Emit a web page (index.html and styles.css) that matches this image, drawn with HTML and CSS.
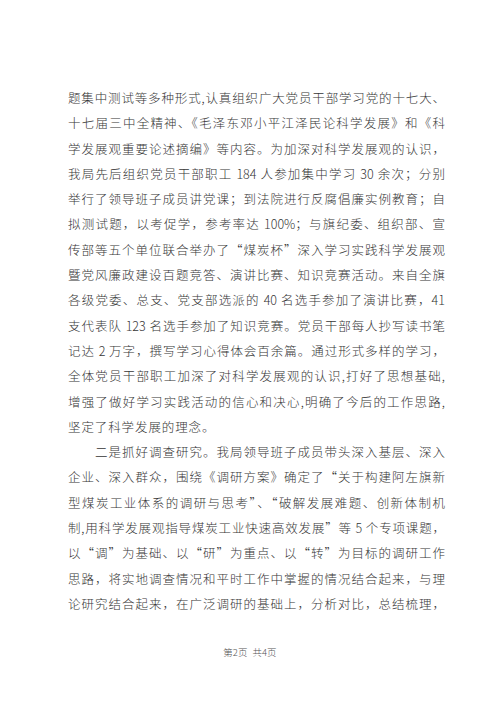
FILE: index.html
```html
<!DOCTYPE html>
<html lang="zh-CN">
<head>
    <meta charset="UTF-8">
    <meta name="viewport" content="width=device-width, initial-scale=1.0">
    <title>第2页</title>
    <link rel="stylesheet" href="styles.css">
</head>
<body>
    <div class="page">
        <div class="text">
            <div class="ln">题集中测试等多种形式,认真组织广大党员干部学习党的十七大、</div>
            <div class="ln">十七届三中全精神、《毛泽东邓小平江泽民论科学发展》和《科</div>
            <div class="ln">学发展观重要论述摘编》等内容。为加深对科学发展观的认识，</div>
            <div class="ln">我局先后组织党员干部职工 184 人参加集中学习 30 余次；分别</div>
            <div class="ln">举行了领导班子成员讲党课；到法院进行反腐倡廉实例教育；自</div>
            <div class="ln">拟测试题，以考促学，参考率达 100%；与旗纪委、组织部、宣</div>
            <div class="ln">传部等五个单位联合举办了“煤炭杯”深入学习实践科学发展观</div>
            <div class="ln">暨党风廉政建设百题竞答、演讲比赛、知识竞赛活动。来自全旗</div>
            <div class="ln">各级党委、总支、党支部选派的 40 名选手参加了演讲比赛，41</div>
            <div class="ln">支代表队 123 名选手参加了知识竞赛。党员干部每人抄写读书笔</div>
            <div class="ln">记达 2 万字，撰写学习心得体会百余篇。通过形式多样的学习，</div>
            <div class="ln">全体党员干部职工加深了对科学发展观的认识,打好了思想基础,</div>
            <div class="ln">增强了做好学习实践活动的信心和决心,明确了今后的工作思路,</div>
            <div class="ln last">坚定了科学发展的理念。</div>
            <div class="ln indent">二是抓好调查研究。我局领导班子成员带头深入基层、深入</div>
            <div class="ln">企业、深入群众，围绕《调研方案》确定了“关于构建阿左旗新</div>
            <div class="ln">型煤炭工业体系的调研与思考”、“破解发展难题、创新体制机</div>
            <div class="ln">制,用科学发展观指导煤炭工业快速高效发展”等 5 个专项课题，</div>
            <div class="ln">以“调”为基础、以“研”为重点、以“转”为目标的调研工作</div>
            <div class="ln">思路，将实地调查情况和平时工作中掌握的情况结合起来，与理</div>
            <div class="ln">论研究结合起来，在广泛调研的基础上，分析对比，总结梳理，</div>
        </div>
        <div class="footer">第2页 共4页</div>
    </div>
</body>
</html>
```

FILE: styles.css
```css
body{
    margin: 0;
    background-color: #ffffff;
    font-family: "Noto Sans CJK SC", "Liberation Serif", serif;
    font-weight: 300;
    color: #363636;
}
.page{
    width: 500px;
    height: 707px;
    padding-top: 85px;
    box-sizing: border-box;
}
.text{
    margin-left: 68px;
    width: 377px;
    font-size: 12.5px;
    line-height: 25.3px;
}
.ln{
    text-align: justify;
    text-align-last: justify;
    white-space: nowrap;
}
.last{
    text-align-last: left;
    letter-spacing: 0.9px;
}
.indent{
    padding-left: 27px;
}
.footer{
    margin-top: 29px;
    text-align: center;
    font-size: 9.5px;
    color: #555555;
    word-spacing: 3px;
}
```
